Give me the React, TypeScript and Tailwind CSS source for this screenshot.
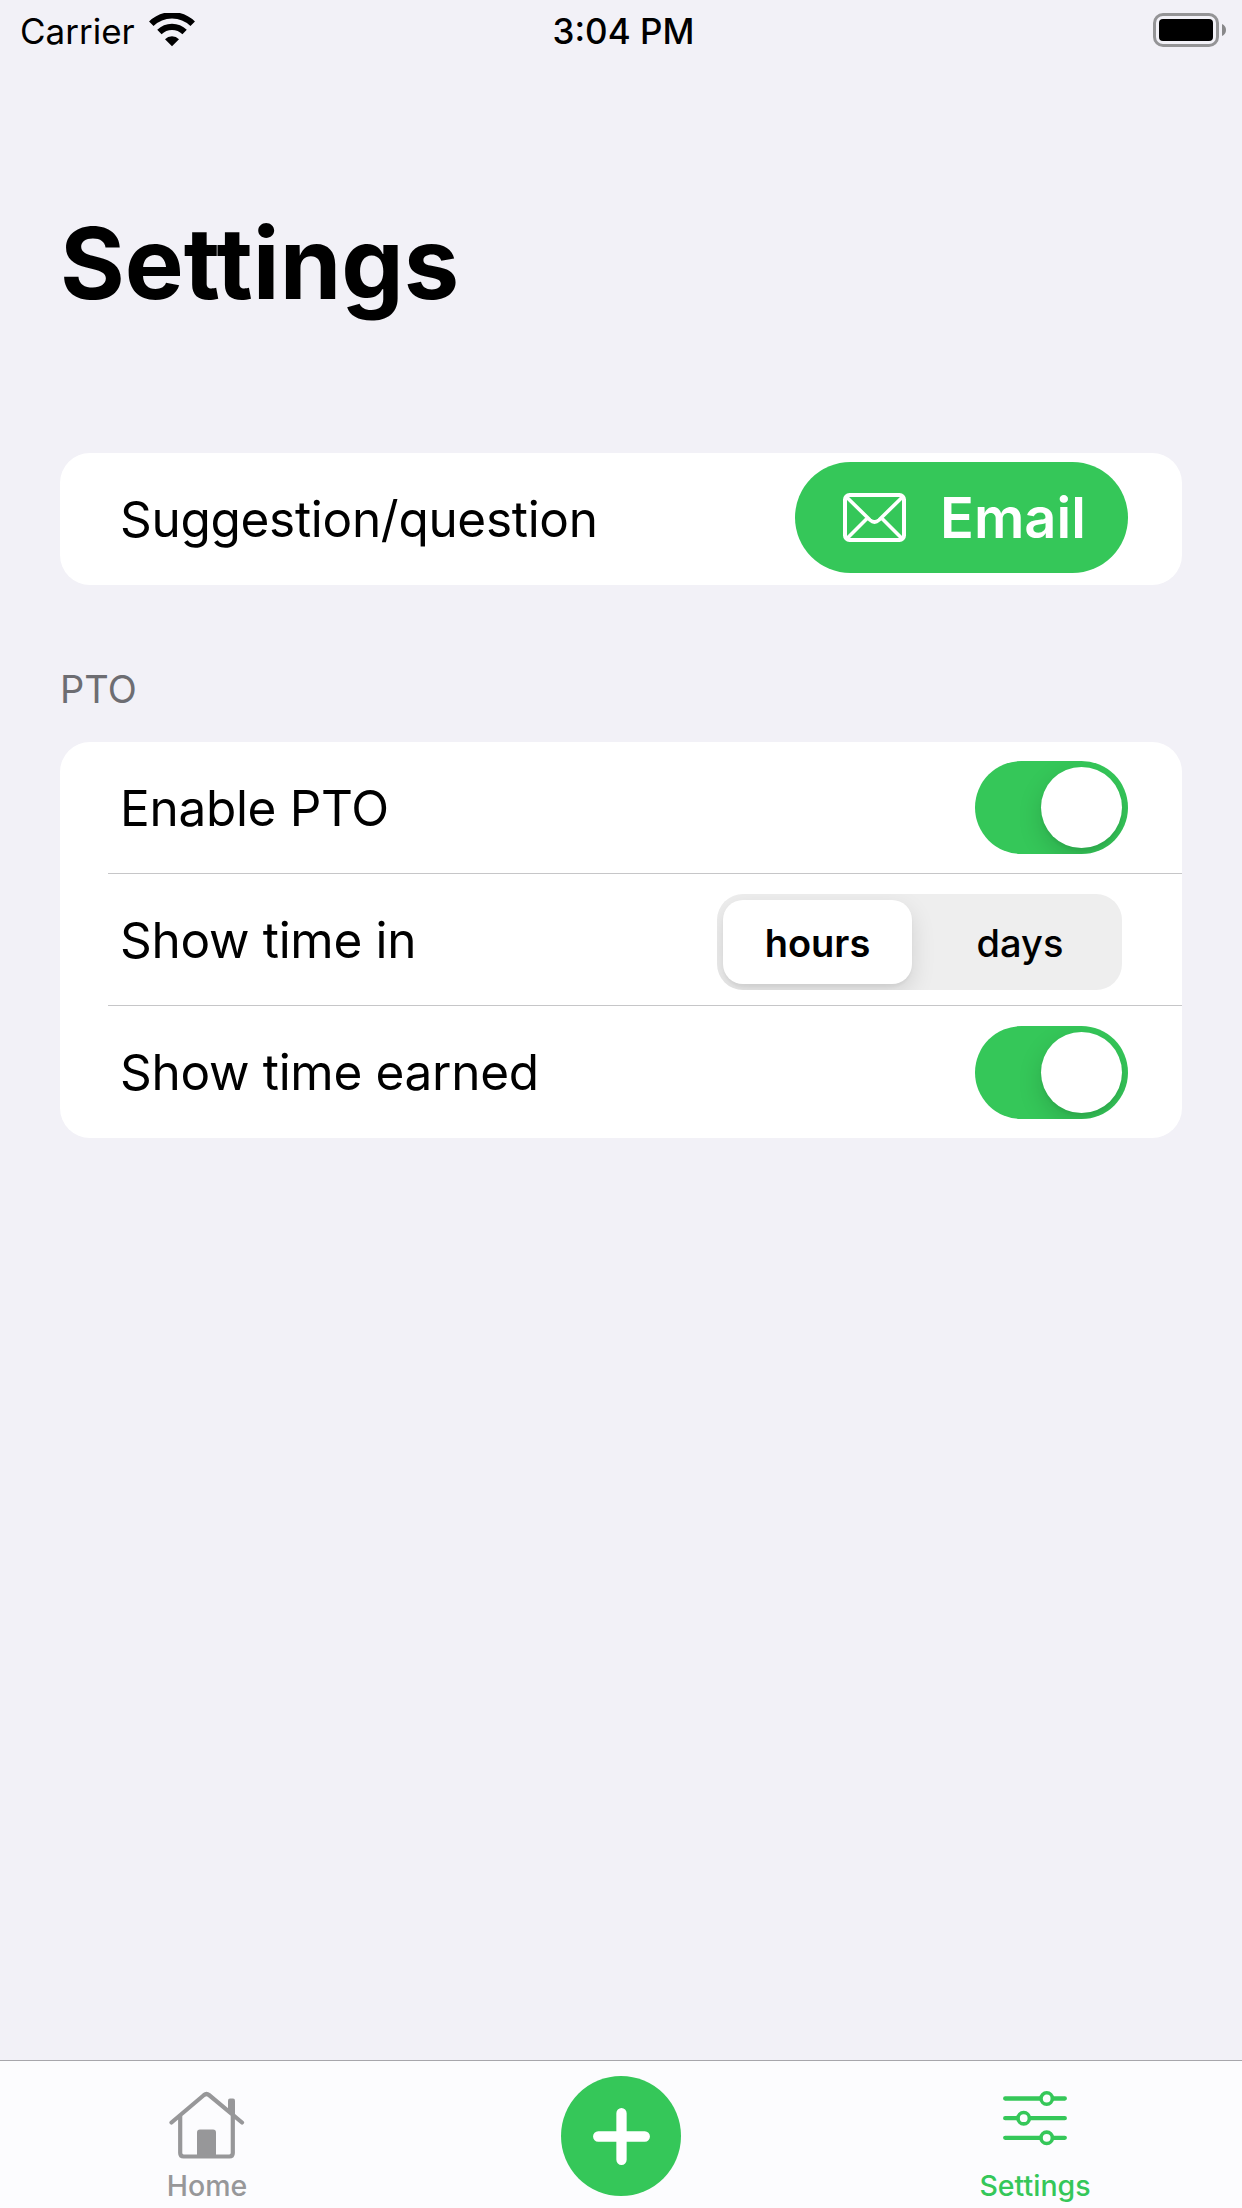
import React, { useState } from "react";

const WifiIcon: React.FC = () => (
  <svg className="ml-[14px] h-[34px] w-[46px]" viewBox="0 0 46 34" fill="none">
    <path d="M2.3 10.8a29.5 29.5 0 0 1 41.4 0" stroke="#000" strokeWidth="6.4" />
    <path d="M10.4 19a18 18 0 0 1 25.2 0" stroke="#000" strokeWidth="6.2" />
    <path d="M16 26.2a9.9 9.9 0 0 1 14 0L23 33.2z" fill="#000" />
  </svg>
);

const BatteryIcon: React.FC = () => (
  <svg className="h-[34px] w-[74px]" viewBox="0 0 74 34" fill="none">
    <rect x="1.5" y="1.5" width="63" height="31" rx="8.5" stroke="#949496" strokeWidth="3" />
    <rect x="6" y="6" width="54" height="22" rx="4" fill="#000" />
    <path d="M69 11c2.600 1 4 3.400 4 6s-1.400 5-4 6z" fill="#88888a" />
  </svg>
);

const MailIcon: React.FC = () => (
  <svg
    className="h-[49px] w-[63px]"
    viewBox="0 0 63 49"
    fill="none"
    stroke="#fff"
    strokeWidth="4"
    strokeLinejoin="round">
    <rect x="2" y="2" width="59" height="45" rx="4.500" />
    <path d="M3.500 4l23.500 23q4.500 4 9 0L59.500 4M4 45.500l19.500-19.500M59 45.500L39.500 26" strokeWidth="3.600" />
  </svg>
);

const HomeIcon: React.FC<{ className?: string }> = ({ className }) => (
  <svg className={className} viewBox="0 0 76 68" fill="none" stroke="currentColor">
    <path
      d="M2.500 31.500L35 4q2.500-2 5 0l33 27.500"
      strokeWidth="4.200"
      strokeLinecap="round"
    />
    <path d="M11.200 25v37q0 3.500 3.500 3.500h45.600q3.500 0 3.500-3.500V25" strokeWidth="4.200" />
    <path d="M59 9.500q0-2 2-2h3q2 0 2 2V26l-7-6z" fill="currentColor" stroke="none" />
    <path d="M28 65V41.500q0-3 3-3h13q3 0 3 3V65z" fill="currentColor" stroke="none" />
  </svg>
);

const SlidersIcon: React.FC<{ className?: string }> = ({ className }) => (
  <svg
    className={className}
    viewBox="0 0 64 55"
    fill="none"
    stroke="currentColor"
    strokeWidth="4.300"
    strokeLinecap="round">
    <path d="M2.200 7.500H37M50 7.500h11.800M2.200 27.200h12M27.500 27.200h34.300M2.200 46.800H37M50 46.800h11.800" />
    <circle cx="43.700" cy="7.500" r="5.700" strokeWidth="3.600" />
    <circle cx="20.700" cy="27.200" r="5.700" strokeWidth="3.600" />
    <circle cx="43.700" cy="46.800" r="5.700" strokeWidth="3.600" />
  </svg>
);

interface ToggleProps {
  checked: boolean;
  onChange: (value: boolean) => void;
  label: string;
}

const Toggle: React.FC<ToggleProps> = ({ checked, onChange, label }) => (
  <button
    role="switch"
    aria-checked={checked}
    aria-label={label}
    onClick={() => onChange(!checked)}
    className={`flex h-[93px] w-[153px] items-center overflow-hidden rounded-full p-1.5 ${
      checked ? "justify-end bg-[#35c759]" : "justify-start bg-[#e9e9eb]"
    }`}>
    <span className="size-[81px] rounded-full bg-white shadow-[0_9px_24px_rgba(0,0,0,0.15),0_3px_3px_rgba(0,0,0,0.05)]" />
  </button>
);

interface RowProps {
  label: string;
  divider?: boolean;
  children: React.ReactNode;
}

const Row: React.FC<RowProps> = ({ label, divider, children }) => (
  <div className="pl-12">
    <div
      className={`flex h-[132px] items-center justify-between pr-[54px] pl-3 ${
        divider ? "border-b border-[#c6c6c8]" : ""
      }`}>
      <span className="pt-0.5 text-[49.500px] tracking-[-0.3px]">{label}</span>
      {children}
    </div>
  </div>
);

const units = ["hours", "days"];

const App: React.FC = () => {
  const [ptoEnabled, setPtoEnabled] = useState(true);
  const [showEarned, setShowEarned] = useState(true);
  const [unit, setUnit] = useState("hours");

  return (
    <div className="flex h-[2208px] w-[1242px] flex-col bg-[#f2f1f7] font-['Inter',sans-serif] leading-none text-black">
      {/* Status bar */}
      <header className="grid h-[60px] grid-cols-3 items-center pr-[15px] pl-5 text-[35px]">
        <div className="flex items-center">
          <span className="pt-0.5">Carrier</span>
          <WifiIcon />
        </div>
        <span className="pt-0.5 text-center font-medium">3:04 PM</span>
        <div className="flex justify-end">
          <BatteryIcon />
        </div>
      </header>

      <main className="flex flex-1 flex-col px-[60px]">
        <h1 className="mt-[154px] text-[99px] font-bold">Settings</h1>

        <section className="mt-[140px] rounded-[30px] bg-white">
          <Row label="Suggestion/question">
            <button className="mb-[3px] flex h-[111px] w-[333px] items-center rounded-full bg-[#35c759] pl-12 text-white">
              <MailIcon />
              <span className="ml-[34px] text-[56px] font-semibold">Email</span>
            </button>
          </Row>
        </section>

        <h2 className="mt-[85px] text-[38px] text-[#6d6d72]">PTO</h2>
        <section className="mt-[34px] rounded-[30px] bg-white">
          <Row label="Enable PTO" divider>
            <Toggle checked={ptoEnabled} onChange={setPtoEnabled} label="Enable PTO" />
          </Row>
          <Row label="Show time in" divider>
            <div className="mt-1 mr-1.5 flex h-24 w-[405px] overflow-hidden rounded-[26px] bg-[#eeeeee] p-1.5">
              {units.map((item) => (
                <button
                  key={item}
                  onClick={() => setUnit(item)}
                  className={`h-[84px] rounded-[20px] pt-0.5 text-[38px] ${
                    unit === item
                      ? "w-[189px] bg-white font-semibold shadow-[0_9px_24px_rgba(0,0,0,0.12),0_3px_3px_rgba(0,0,0,0.04)]"
                      : "flex-1 pl-3 font-medium"
                  }`}>
                  {item}
                </button>
              ))}
            </div>
          </Row>
          <Row label="Show time earned">
            <Toggle checked={showEarned} onChange={setShowEarned} label="Show time earned" />
          </Row>
        </section>
      </main>

      {/* Tab bar */}
      <nav className="grid h-[148px] grid-cols-3 border-t border-[#a7a6ab] bg-[#fcfcfe] text-[28.500px] font-medium">
        <a className="flex flex-col items-center pt-[30px] text-[#979799]">
          <HomeIcon className="h-[68px] w-[76px]" />
          <span className="mt-[13px]">Home</span>
        </a>
        <div className="flex justify-center pt-[15px]">
          <button
            aria-label="Add"
            className="flex size-[120px] items-center justify-center rounded-full bg-[#35c759] text-white">
            <svg
              className="size-[57px]"
              viewBox="0 0 57 57"
              stroke="currentColor"
              strokeWidth="10.300"
              strokeLinecap="round">
              <path d="M28.500 5.200v46.600M5.200 28.500h46.600" />
            </svg>
          </button>
        </div>
        <a className="flex flex-col items-center pt-[30px] text-[#35c759]">
          <SlidersIcon className="h-[55px] w-16" />
          <span className="mt-[26px]">Settings</span>
        </a>
      </nav>
    </div>
  );
};

export default App;
